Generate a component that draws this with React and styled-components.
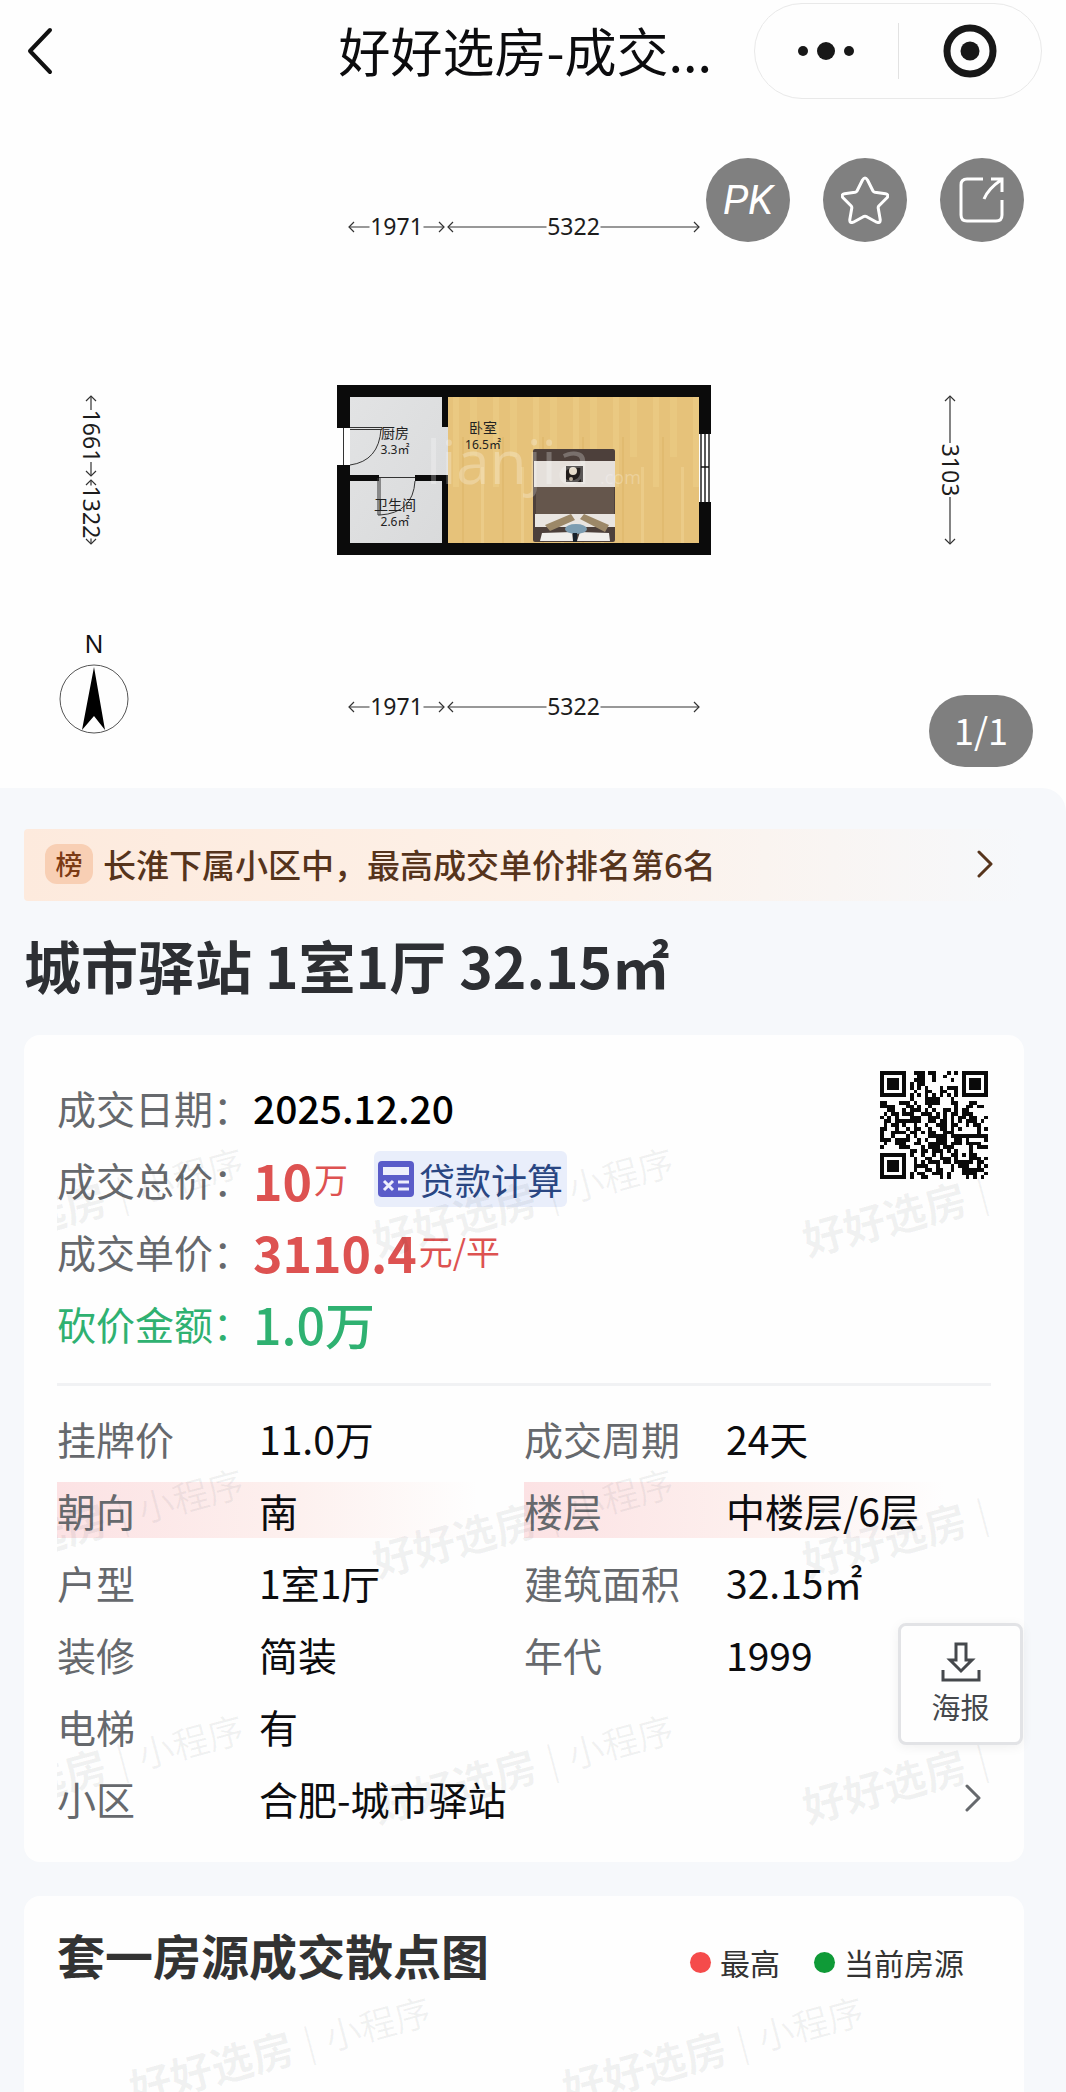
import React from "react";
import styled, { createGlobalStyle, css } from "styled-components";

const GlobalStyle = createGlobalStyle`
  * {
    box-sizing: border-box;
  }

  body {
    margin: 0;
    background-color: #fefefe;
    font-family: "Noto Sans CJK SC", "Noto Sans", sans-serif;
    color: #0c0c0e;
  }

  button {
    font-family: inherit;
    padding: 0;
    border: none;
    cursor: pointer;
  }
`;

const Page = styled.div`
  overflow: hidden;
`;

const Header = styled.header`
  display: flex;
  align-items: center;
  height: 104px;
  padding: 0 24px 2px 16px;
`;

const BackBtn = styled.button`
  display: flex;
  justify-content: center;
  width: 48px;
  background-color: transparent;
`;

const PageTitle = styled.div`
  flex: 1;
  padding: 0 42px 2px 0;
  font-size: 52px;
  line-height: 72px;
  text-align: right;
  white-space: nowrap;
`;

const Capsule = styled.div`
  display: flex;
  align-items: center;
  width: 288px;
  height: 96px;
  border: 1px solid #e9e9e9;
  border-radius: 48px;
`;

const CapsuleBtn = styled.button`
  display: flex;
  flex: 1;
  align-items: center;
  justify-content: center;
  height: 56px;
  background-color: transparent;

  & + & {
    border-left: 1px solid #e2e2e2;
  }
`;

const Gallery = styled.section`
  position: relative;

  > svg {
    display: block;
    width: 100%;
  }
`;

const Actions = styled.div`
  position: absolute;
  top: 54px;
  right: 42px;
  display: flex;
  gap: 33px;
`;

const RoundBtn = styled.button`
  display: flex;
  align-items: center;
  justify-content: center;
  width: 84px;
  height: 84px;
  border-radius: 50%;
  background-color: #808080;
  color: white;
  font-family: Roboto, sans-serif;
  font-size: 41px;
  font-style: italic;
`;

const Counter = styled.span`
  position: absolute;
  right: 33px;
  bottom: 21px;
  width: 104px;
  padding-bottom: 4px;
  border-radius: 36px;
  background-color: #7f7f7f;
  color: white;
  font-size: 36px;
  line-height: 68px;
  text-align: center;
`;

const Panel = styled.main`
  padding: 41px 42px 0 24px;
  border-radius: 0 24px 0 0;
  background-color: #f6f8fb;
`;

const RankLink = styled.a`
  display: flex;
  align-items: center;
  gap: 10px;
  height: 72px;
  padding: 0 30px 2px 21px;
  border-radius: 4px;
  background: linear-gradient(90deg, #fdeadd 0%, #fdf1e8 55%, #f6f8fb 100%);
  color: #56341c;
  font-size: 33px;
  font-weight: 500;
  text-decoration: none;

  svg {
    margin-left: auto;
  }
`;

const RankBadge = styled.span`
  width: 48px;
  border-radius: 12px;
  background-color: #f8cfb4;
  color: #7c3a14;
  font-size: 27px;
  line-height: 40px;
  text-align: center;
`;

const HouseTitle = styled.h1`
  margin: 22px 0 30px;
  color: #2d2f33;
  font-size: 57px;
  font-weight: 700;
  line-height: 82px;
`;

const Card = styled.section`
  position: relative;
  padding: 36px 33px 28px;
  border-radius: 16px;
  background-color: #fefefe;
`;

const Block = styled.div`
  position: relative;
  overflow: hidden;
`;

const Summary = styled(Block)`
  display: flex;
  align-items: flex-start;
  justify-content: space-between;
  padding-bottom: 24px;
  border-bottom: 3px solid #f1f2f4;
`;

const PriceList = styled.dl`
  margin: 0;
`;

const PriceRow = styled.div`
  display: flex;
  align-items: center;
  height: 72px;
`;

const PriceLabel = styled.dt`
  width: 196px;
  color: ${({ $tone }) => $tone || "#66696d"};
  font-size: 39px;
  white-space: nowrap;
`;

const PriceValue = styled.dd`
  display: flex;
  align-items: center;
  margin: 0;
  color: ${({ $tone }) => $tone || "#000"};
  font-size: ${({ $big }) => ($big ? "50px" : "39px")};
  font-weight: ${({ $bold }) => ($bold ? 700 : 500)};
  line-height: 72px;
`;

const Unit = styled.small`
  margin: 0 26px 0 2px;
  font-size: 34px;
  font-weight: 400;
`;

const LoanBtn = styled.button`
  display: flex;
  align-items: center;
  gap: 5px;
  height: 56px;
  padding: 0 4px;
  border-radius: 6px;
  background-color: #e9eefb;
  color: #294683;
  font-size: 36px;
`;

const QrCode = styled.svg`
  width: 108px;
  height: 108px;
  margin-right: 3px;
`;

const InfoGrid = styled.dl`
  display: grid;
  grid-template-columns: 1fr 1fr;
  margin: 16px 0 0;
`;

const InfoRow = styled.div`
  display: flex;
  align-items: center;
  height: 56px;
  margin: 8px 0;
  font-size: 39px;
  white-space: nowrap;

  ${({ $wide }) => $wide && css`
    grid-column: 1 / -1;
  `}

  ${({ $marked }) => $marked && css`
    background: linear-gradient(90deg, #fce2e4 0%, #fdf0ee 50%, #fefefe 90%);
  `}
`;

const InfoLabel = styled.dt`
  width: 202px;
  color: #66696d;
`;

const InfoValue = styled.dd`
  flex: 1;
  margin: 0;
`;

const PlaceLink = styled.a`
  display: flex;
  align-items: center;
  justify-content: space-between;
  padding-right: 9px;
  color: inherit;
  text-decoration: none;
`;

const Watermark = styled.span`
  position: absolute;
  left: ${({ $x }) => $x}px;
  top: ${({ $y }) => $y}px;
  display: flex;
  align-items: center;
  gap: 12px;
  color: rgba(40, 50, 60, 0.06);
  font-size: 42px;
  font-weight: 700;
  line-height: 48px;
  white-space: nowrap;
  transform: rotate(-15deg);
  transform-origin: 0 50%;
  pointer-events: none;

  small {
    font-size: 36px;
    font-weight: 400;
  }
`;

const PosterBtn = styled.button`
  position: absolute;
  right: 1px;
  bottom: 117px;
  display: flex;
  flex-direction: column;
  align-items: center;
  justify-content: center;
  gap: 2px;
  width: 125px;
  height: 122px;
  border: 3px solid #e2e3e6;
  border-radius: 8px;
  background-color: #fefefe;
  box-shadow: 0 2px 12px rgba(0, 0, 0, 0.06);
  color: #45484c;
  font-size: 29px;
  line-height: 42px;
`;

const ChartCard = styled(Card)`
  min-height: 196px;
  margin-top: 34px;
  padding: 26px 33px 0;
  border-radius: 16px 16px 0 0;
  overflow: hidden;
`;

const ChartHead = styled.div`
  display: flex;
  align-items: center;
  justify-content: space-between;
`;

const ChartTitle = styled.h2`
  margin: 0;
  color: #333;
  font-size: 48px;
  font-weight: 700;
  line-height: 64px;
`;

const Legend = styled.ul`
  display: flex;
  gap: 34px;
  margin: 16px 27px 0 0;
  padding: 0;
  list-style: none;
`;

const LegendItem = styled.li`
  display: flex;
  align-items: center;
  gap: 9px;
  color: #333;
  font-size: 30px;
  line-height: 42px;

  &::before {
    content: "";
    width: 21px;
    height: 21px;
    border-radius: 50%;
    background-color: ${({ $color }) => $color};
  }
`;

const RED = "#dd5251";
const GREEN = "#2fb171";

const QR_ROWS = [
  "#######..###.##...#.#.#######",
  "#.....#...##..#..#....#.....#",
  "#.###.#..###..#....#..#.###.#",
  "#.###.#.#.##..........#.###.#",
  "#.###.#.#.#.#...#.###.#.###.#",
  "#.....#..#..##..##..#.#.....#",
  "#######.#.#.#.#.#.#.#.#######",
  "........#...####...#.........",
  "##...###.#..####...##...##...",
  "####...##.#..#......#..##.##.",
  "..##..#.###.#.#..##.#.##.....",
  ".#.##.###..###.#.#.##.###....",
  "#.#.#...###..###.#.#.##.##..#",
  ".##.#######..##.##.#.#.###.#.",
  ".#.##.#..#..#..###.##..#.##..",
  "##..#..#.##..#..##.#.#....#.#",
  "#..####.##.#.##..###......#..",
  "#..#...#.#...#####.##########",
  "###.####..#.#..###..##.#....#",
  ".#..###..##..#####.###.####..",
  "#....###...#.###.###....#.###",
  "........##.##.###.#.#...#....",
  "#######.#..#..#.#..##.#.##...",
  "#.....#..#..##..###.#...###.#",
  "#.###.#..#.#.###.##.#####.##.",
  "#.###.#..####..#...#.###..#.#",
  "#.###.#..#..##.##..#..######.",
  "#.....#.#.##..###.#...####..#",
  "#######.#..##...#.#....#.#.#.",
];

const INFO = [
  { label: "挂牌价", value: "11.0万" },
  { label: "成交周期", value: "24天" },
  { label: "朝向", value: "南", marked: true },
  { label: "楼层", value: "中楼层/6层", marked: true },
  { label: "户型", value: "1室1厅" },
  { label: "建筑面积", value: "32.15㎡" },
  { label: "装修", value: "简装" },
  { label: "年代", value: "1999" },
  { label: "电梯", value: "有", wide: true },
];

const Mark = ({ x, y }) => (
  <Watermark $x={x} $y={y} aria-hidden="true">
    好好选房<small>|</small><small>小程序</small>
  </Watermark>
);

const Chevron = ({ color }) => (
  <svg width="17" height="28" viewBox="0 0 17 28" fill="none" stroke={color} strokeWidth="3">
    <path d="M2 2l12 12L2 26" strokeLinecap="round" strokeLinejoin="round" />
  </svg>
);

const Qr = () => (
  <QrCode viewBox="0 0 29 29" shapeRendering="crispEdges" role="img" aria-label="二维码">
    {QR_ROWS.map((row, y) =>
      row.split("").map((c, x) =>
        c === "#" ? <rect key={`${x}-${y}`} x={x} y={y} width="1" height="1" fill="#0a0a0a" /> : null
      )
    )}
  </QrCode>
);

// dimension line with an arrow head at both ends and a gap for its number
const Dim = ({ length, label, gap = 54 }) => {
  const mid = length / 2;
  return (
    <g fill="none" stroke="#333" strokeWidth="1.2">
      <path d={`M0 0H${mid - gap / 2}M${mid + gap / 2} 0H${length}`} />
      <path d={`M5 -5L0 0l5 5M${length - 5} -5l5 5l-5 5`} />
      <text x={mid} y="8" fill="#1c1c1c" stroke="none" fontSize="23" textAnchor="middle">{label}</text>
    </g>
  );
};

const FloorPlan = () => (
  <svg viewBox="0 104 1066 684" fontFamily="Noto Sans, Noto Sans CJK SC, sans-serif" role="img" aria-label="户型图">
    <defs>
      <pattern id="wood" width="40" height="146" patternUnits="userSpaceOnUse" x="448" y="397">
        <rect width="40" height="146" fill="#e6c27a" />
        <rect x="5" width="6" height="90" fill="#eac982" />
        <rect x="14" y="40" width="2" height="106" fill="#e1bb70" />
        <rect x="22" width="7" height="60" fill="#e9c880" />
        <rect x="33" y="70" width="3" height="76" fill="#ebcb88" />
      </pattern>
      <linearGradient id="tile" x1="0" y1="0" x2="1" y2="1">
        <stop offset="0" stopColor="#e2e3e4" />
        <stop offset="1" stopColor="#d9dadb" />
      </linearGradient>
    </defs>

    <g transform="translate(349 227)"><Dim length={95} label="1971" /></g>
    <g transform="translate(448 227)"><Dim length={251} label="5322" /></g>
    <g transform="translate(349 707)"><Dim length={95} label="1971" /></g>
    <g transform="translate(448 707)"><Dim length={251} label="5322" /></g>
    <g transform="translate(91 396) rotate(90)"><Dim length={80} label="1661" gap={52} /></g>
    <g transform="translate(91 480) rotate(90)"><Dim length={64} label="1322" gap={53} /></g>
    <g transform="translate(950 396) rotate(90)"><Dim length={148} label="3103" /></g>

    <rect x="337" y="385" width="374" height="170" fill="#0b0b0b" />
    <rect x="350" y="397" width="98" height="146" fill="url(#tile)" />
    <rect x="448" y="397" width="251" height="146" fill="url(#wood)" />
    <path d="M442 397h6v30h-6zM442 475h6v68h-6zM350 475h29v6h-29zM415 475h33v6h-33z" fill="#0b0b0b" />
    <rect x="337" y="428" width="13" height="37" fill="#fefefe" />
    <rect x="699" y="434" width="12" height="68" fill="#fefefe" />
    <path d="M701 434v68M705 434v68M709 434v68M701 467h8" fill="none" stroke="#111" strokeWidth="1.4" />
    <g fill="none" stroke="#333" strokeWidth="1">
      <path d="M343.500 428v37M350 427.500h32v2h-32M381 429q-2 32-31 36" />
      <path d="M379 477.500h36M378 478v37h2v-37M415 481q-2 32-35 34" />
    </g>

    <rect x="533" y="449" width="82" height="93" rx="2" fill="#4d403b" />
    <path d="M534 461h81v26h-81z" fill="#e5e0db" />
    <rect x="536" y="487" width="78" height="27" fill="#65564c" />
    <path d="M535 514h80v13h-80z" fill="#e9e5e1" />
    <rect x="566" y="466" width="17" height="16" fill="#221e1c" />
    <circle cx="573" cy="471" r="4" fill="#e6dccb" />
    <circle cx="571" cy="479" r="2" fill="#b9ad9b" />
    <path d="M542 533l30-1 1 9h-33zM609 533l-29-1-3 9h33z" fill="#f1efec" />
    <path d="M545 525l26-11 4 6-25 11zM580 519l4-5 25 11-4 7z" fill="#9c8868" />
    <ellipse cx="576" cy="529" rx="11" ry="5" fill="#7d9db1" />
    <path d="M573 533h4v9h-4z" fill="#17202a" />

    <g fill="#fff" fillOpacity="0.25" fontFamily="Open Sans, sans-serif">
      <text x="426" y="484" fontSize="60">lianjia</text>
      <text x="600" y="484" fontSize="18">.com</text>
    </g>

    <g fill="#222" textAnchor="middle">
      <text x="395" y="438" fontSize="14">厨房</text>
      <text x="395" y="454" fontSize="12">3.3㎡</text>
      <text x="395" y="510" fontSize="14">卫生间</text>
      <text x="395" y="526" fontSize="12">2.6㎡</text>
      <text x="483" y="433" fontSize="14">卧室</text>
      <text x="483" y="449" fontSize="12">16.5㎡</text>
    </g>

    <text x="94" y="653" fontSize="25" fill="#111" textAnchor="middle">N</text>
    <circle cx="94" cy="699" r="34" fill="none" stroke="#555" />
    <path d="M94 667l11 63-11-14-12 14z" fill="#000" />
  </svg>
);

const App = () => {
  return (
    <Page>
      <GlobalStyle />
      <Header>
        <BackBtn aria-label="返回">
          <svg width="26" height="48" viewBox="0 0 26 48" fill="none" stroke="#111" strokeWidth="4">
            <path d="M23 3L3 24l20 21" strokeLinecap="round" strokeLinejoin="round" />
          </svg>
        </BackBtn>
        <PageTitle>好好选房-成交...</PageTitle>
        <Capsule>
          <CapsuleBtn aria-label="更多">
            <svg width="58" height="20" viewBox="0 0 58 20" fill="#181818">
              <circle cx="6" cy="10" r="5" />
              <circle cx="29" cy="10" r="9" />
              <circle cx="52" cy="10" r="5" />
            </svg>
          </CapsuleBtn>
          <CapsuleBtn aria-label="关闭">
            <svg width="54" height="54" viewBox="0 0 54 54">
              <circle cx="27" cy="27" r="23" fill="none" stroke="#181818" strokeWidth="7" />
              <circle cx="27" cy="27" r="9.500" fill="#181818" />
            </svg>
          </CapsuleBtn>
        </Capsule>
      </Header>

      <Gallery>
        <FloorPlan />
        <Actions>
          <RoundBtn>PK</RoundBtn>
          <RoundBtn aria-label="收藏">
            <svg width="48" height="48" viewBox="0 0 48 48" fill="none" stroke="#fff" strokeWidth="3" strokeLinejoin="round">
              <path d="M21.500 4q2.500-4 5 0l5.500 11q.6 1 2 1.300l10.500 1.500q4 1 1.500 4l-8 8q-1 1-.8 2.300l2 11.500q.3 4-3.500 2.600l-10-5.500q-1.700-.8-3.400 0l-10 5.500q-3.800 1.400-3.500-2.600l2-11.500q.2-1.300-.8-2.300l-8-8q-2.500-3 1.500-4l10.500-1.500q1.400-.3 2-1.300z" />
            </svg>
          </RoundBtn>
          <RoundBtn aria-label="分享">
            <svg width="48" height="48" viewBox="0 0 48 48" fill="none" stroke="#fff" strokeWidth="3">
              <path d="M25 3H9q-6 0-6 6v30q0 6 6 6h29q6 0 6-6V24" />
              <path d="M33 3h11v13M43 4q-13 9-17 19" />
            </svg>
          </RoundBtn>
        </Actions>
        <Counter>1/1</Counter>
      </Gallery>

      <Panel>
        <RankLink href="#rank">
          <RankBadge>榜</RankBadge>
          长淮下属小区中，最高成交单价排名第6名
          <Chevron color="#56341c" />
        </RankLink>
        <HouseTitle>城市驿站 1室1厅 32.15㎡</HouseTitle>

        <Card>
          <Summary>
            <Mark x={-114} y={144} />
            <Mark x={316} y={144} />
            <Mark x={746} y={144} />
            <PriceList>
              <PriceRow>
                <PriceLabel>成交日期：</PriceLabel>
                <PriceValue>2025.12.20</PriceValue>
              </PriceRow>
              <PriceRow>
                <PriceLabel>成交总价：</PriceLabel>
                <PriceValue $tone={RED} $big $bold>
                  10<Unit>万</Unit>
                  <LoanBtn>
                    <svg width="36" height="36" viewBox="0 0 36 36">
                      <rect width="36" height="36" rx="4" fill="#5a5cc9" />
                      <rect x="5" y="6" width="26" height="8" fill="#eef0fc" />
                      <path d="M6 20l9 9M15 20l-9 9M20 21h11M20 28h11" stroke="#eef0fc" strokeWidth="3" />
                    </svg>
                    贷款计算
                  </LoanBtn>
                </PriceValue>
              </PriceRow>
              <PriceRow>
                <PriceLabel>成交单价：</PriceLabel>
                <PriceValue $tone={RED} $big $bold>3110.4<Unit>元/平</Unit></PriceValue>
              </PriceRow>
              <PriceRow>
                <PriceLabel $tone={GREEN}>砍价金额：</PriceLabel>
                <PriceValue $tone={GREEN} $big>1.0万</PriceValue>
              </PriceRow>
            </PriceList>
            <Qr />
          </Summary>

          <Block>
            <Mark x={-114} y={150} />
            <Mark x={316} y={150} />
            <Mark x={746} y={150} />
            <Mark x={-114} y={396} />
            <Mark x={316} y={396} />
            <Mark x={746} y={396} />
            <InfoGrid>
              {INFO.map(({ label, value, marked, wide }) => (
                <InfoRow key={label} $marked={marked} $wide={wide}>
                  <InfoLabel>{label}</InfoLabel>
                  <InfoValue>{value}</InfoValue>
                </InfoRow>
              ))}
              <InfoRow $wide>
                <InfoLabel>小区</InfoLabel>
                <InfoValue>
                  <PlaceLink href="#community">
                    合肥-城市驿站
                    <Chevron color="#66696d" />
                  </PlaceLink>
                </InfoValue>
              </InfoRow>
            </InfoGrid>
          </Block>

          <PosterBtn>
            <svg width="42" height="42" viewBox="0 0 42 42" fill="none" stroke="#45484c" strokeWidth="3">
              <path d="M16 3h10v16h6L21 30 10 19h6z" />
              <path d="M3 29v10h36V29" />
            </svg>
            海报
          </PosterBtn>
        </Card>

        <ChartCard>
          <Mark x={106} y={168} />
          <Mark x={539} y={168} />
          <ChartHead>
            <ChartTitle>套一房源成交散点图</ChartTitle>
            <Legend>
              <LegendItem $color="#f54b4b">最高</LegendItem>
              <LegendItem $color="#0f9a37">当前房源</LegendItem>
            </Legend>
          </ChartHead>
        </ChartCard>
      </Panel>
    </Page>
  );
};

export default App;
